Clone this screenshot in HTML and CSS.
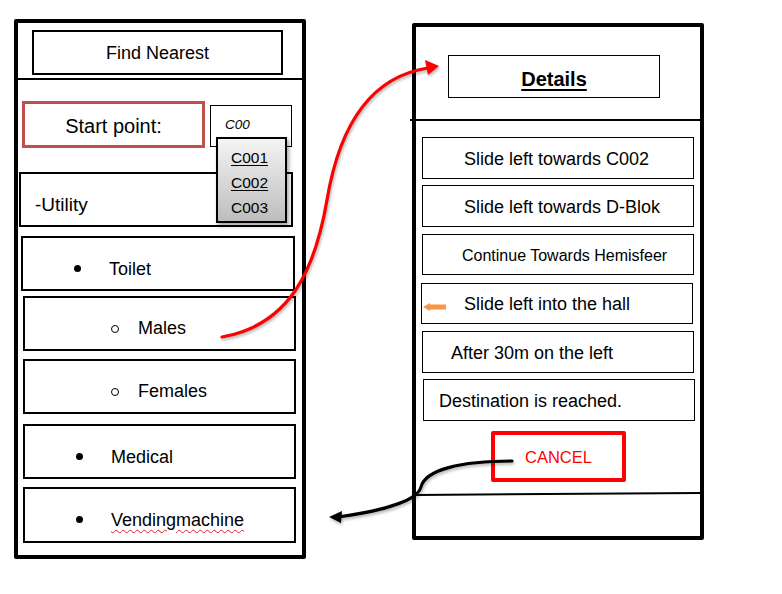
FILE: index.html
```html
<!DOCTYPE html>
<html lang="en">
<head>
<meta charset="utf-8">
<title>Find Nearest mockup</title>
<link rel="stylesheet" href="styles.css">
</head>
<body>
<div class="stage">
  <section class="panel panel-left">
    <div class="title-box">Find Nearest</div>
    <div class="rule"></div>
    <div class="start-row">
      <div class="start-box">Start point:</div>
      <div class="code-box">C00</div>
      <ul class="dropdown">
        <li class="dd-item dd-link">C001</li>
        <li class="dd-item dd-link">C002</li>
        <li class="dd-item">C003</li>
      </ul>
    </div>
    <div class="item item-util">-Utility</div>
    <div class="item item-toilet"><span class="dot"></span><span class="label">Toilet</span></div>
    <div class="item item-sub item-males"><span class="ring"></span><span class="label">Males</span></div>
    <div class="item item-sub item-females"><span class="ring"></span><span class="label">Females</span></div>
    <div class="item item-sub item-medical"><span class="dot"></span><span class="label">Medical</span></div>
    <div class="item item-sub item-vending"><span class="dot"></span><span class="label spell">Vendingmachine</span></div>
  </section>

  <section class="panel panel-right">
    <div class="details-box"><span class="details-text">Details</span></div>
    <div class="rule rule-right"></div>
    <div class="steps">
      <div class="step s1">Slide left towards C002</div>
      <div class="step s2">Slide left towards D-Blok</div>
      <div class="step s3">Continue Towards Hemisfeer</div>
      <div class="step s4"><svg class="orange-arrow" width="23" height="8" viewBox="0 0 23 8"><polygon points="0,4 7,0 7,1.4 23,1.4 23,6.6 7,6.6 7,8" fill="#f79646"/></svg><span>Slide left into the hall</span></div>
      <div class="step s5">After 30m on the left</div>
      <div class="step s6">Destination is reached.</div>
    </div>
    <div class="cancel">CANCEL</div>
    <div class="rule rule-bottom"></div>
  </section>
</div>

<svg class="overlay" width="782" height="594" viewBox="0 0 782 594">
  <g class="shadowed">
    <path d="M222,337 C290,325 315,270 327,200 C337,140 362,78 428,68" fill="none" stroke="#ff0000" stroke-width="3.2" stroke-linecap="round"/>
    <polygon points="439,66 425,60 428,75" fill="#ff0000"/>
    <path d="M512,461 C460,461 425,470 421,487 C418,499 390,510 338,517" fill="none" stroke="#000" stroke-width="3.2" stroke-linecap="round"/>
    <polygon points="329,517 342,511 341,523" fill="#000"/>
  </g>
</svg>
</body>
</html>
```

FILE: styles.css
```css
* { box-sizing: border-box; }

html, body {
  margin: 0;
  padding: 0;
}

body {
  width: 782px;
  height: 594px;
  background: #fff;
  color: #000;
  font-family: "Liberation Sans", Arial, sans-serif;
  position: relative;
  overflow: hidden;
}

.stage {
  display: flex;
  align-items: flex-start;
  padding-left: 14px;
  gap: 106px;
}

.panel {
  width: 292px;
  border: 4px solid #000;
  border-radius: 2px;
  display: flex;
  flex-direction: column;
  align-items: flex-start;
}

.panel-left {
  margin-top: 19px;
  height: 540px;
}

.panel-right {
  margin-top: 23px;
  height: 517px;
}

/* ---------- left panel ---------- */
.title-box {
  margin: 7px 0 0 14px;
  width: 251px;
  height: 45px;
  border: 2px solid #000;
  display: flex;
  align-items: center;
  justify-content: center;
  font-size: 18px;
  padding-top: 1px;
}

.rule {
  align-self: stretch;
  height: 2px;
  background: #000;
  margin-top: 3px;
}

.start-row {
  position: relative;
  display: flex;
  align-items: flex-start;
  margin-top: 21px;
  align-self: stretch;
}

.start-box {
  margin-left: 4px;
  width: 183px;
  height: 47px;
  border: 3px solid #c0504d;
  display: flex;
  align-items: center;
  justify-content: center;
  font-size: 20px;
  padding-top: 4px;
}

.code-box {
  margin: 4px 0 0 5px;
  width: 82px;
  height: 42px;
  border: 1px solid #000;
  padding: 11px 0 0 14px;
  font-size: 13.5px;
  line-height: 16px;
  font-style: italic;
}

.dropdown {
  position: absolute;
  left: 198px;
  top: 36px;
  width: 71px;
  height: 86px;
  margin: 0;
  padding: 6px 0 0 13px;
  list-style: none;
  border: 2px solid #000;
  background: linear-gradient(#f4f4f4, #bdbdbd);
  box-shadow: 2px 3px 4px rgba(0, 0, 0, 0.35);
  z-index: 2;
  font-size: 15.5px;
}

.dd-item {
  height: 25px;
  line-height: 25px;
}

.dd-link {
  text-decoration: underline;
  text-underline-offset: 2px;
}

.item {
  height: 55px;
  border: 2px solid #000;
  display: flex;
  align-items: center;
  padding-top: 11px;
  font-size: 18px;
}

.item-util {
  margin: 24px 0 0 1px;
  width: 274px;
  padding-left: 14px;
  font-size: 19px;
}

.item-toilet {
  margin: 9px 0 0 3px;
  width: 274px;
  padding-left: 51px;
}

.item-sub {
  margin-left: 5px;
  width: 273px;
}

.item-males { margin-top: 5px; padding-left: 86px; padding-top: 9px; }
.item-females { margin-top: 8px; padding-left: 86px; padding-top: 9px; }
.item-medical { margin-top: 10px; padding-left: 51px; }
.item-vending { margin-top: 8px; height: 56px; padding-left: 51px; padding-top: 10px; }

.dot {
  width: 7px;
  height: 7px;
  border-radius: 50%;
  background: #000;
  margin-right: 28px;
  margin-top: -2px;
}

.ring {
  width: 8px;
  height: 8px;
  border-radius: 50%;
  border: 1px solid #000;
  margin-right: 19px;
  margin-top: 2px;
}

.spell {
  text-decoration: underline wavy #e02020;
  text-decoration-thickness: 1px;
  text-underline-offset: 3px;
}

/* ---------- right panel ---------- */
.details-box {
  margin: 28px 0 0 32px;
  width: 212px;
  height: 43px;
  border: 1px solid #000;
  display: flex;
  align-items: center;
  justify-content: center;
  padding-top: 5px;
}

.details-text {
  font-size: 20px;
  font-weight: bold;
  text-decoration: underline;
  text-underline-offset: 3px;
}

.rule-right {
  margin-top: 21px;
  margin-left: -6px;
  width: calc(100% + 6px);
}

.steps {
  margin-top: 16px;
  display: flex;
  flex-direction: column;
  align-items: flex-start;
}

.step {
  width: 272px;
  height: 42px;
  border: 1px solid #000;
  display: flex;
  align-items: center;
  font-size: 18px;
  white-space: nowrap;
  padding-top: 2px;
}

.s1 { margin-left: 6px; padding-left: 41px; }
.s2 { margin: 6px 0 0 6px; padding-left: 41px; }
.s3 { margin: 7px 0 0 6px; height: 41px; padding-left: 39px; font-size: 16px; }
.s4 { margin: 8px 0 0 5px; height: 41px; padding-left: 1px; }
.s5 { margin: 7px 0 0 6px; padding-left: 28px; }
.s6 { margin: 6px 0 0 7px; padding-left: 15px; }

.orange-arrow {
  display: block;
  margin-right: 18px;
  margin-top: 4px;
}

.cancel {
  margin: 10px 0 0 75px;
  width: 135px;
  height: 51px;
  border: 4px solid #ff0000;
  border-radius: 2px;
  display: flex;
  align-items: center;
  justify-content: center;
  color: #ff0000;
  font-size: 16.5px;
  padding-top: 2px;
}

.rule-bottom {
  margin-top: 11px;
  height: 1.6px;
  transform: rotate(-0.4deg);
}

/* ---------- connectors ---------- */
.overlay {
  position: absolute;
  left: 0;
  top: 0;
  pointer-events: none;
  z-index: 5;
}

.shadowed {
  filter: drop-shadow(1px 2px 1.5px rgba(0, 0, 0, 0.3));
}
```
